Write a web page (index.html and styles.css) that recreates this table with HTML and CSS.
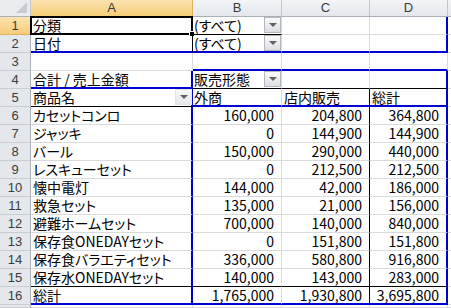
FILE: index.html
```html
<!DOCTYPE html>
<html lang="ja">
<head>
<meta charset="utf-8">
<link rel="stylesheet" href="styles.css">
</head>
<body>
<div class="sheet">
  <div class="corner"><span class="tri"></span></div>
  <div class="ch sel">A</div>
  <div class="ch">B</div>
  <div class="ch">C</div>
  <div class="ch">D</div>
  <div class="ch last"></div>

  <div class="rh sel">1</div>
  <div class="c a1 brk bbk">分類<span class="active"><span class="handle"></span></span></div>
  <div class="c b bbk">(すべて)<span class="dd"><i></i></span></div>
  <div class="c"></div>
  <div class="c br2"></div>
  <div class="c"></div>

  <div class="rh">2</div>
  <div class="c brk bb2">日付</div>
  <div class="c b bb2">(すべて)<span class="dd"><i></i></span></div>
  <div class="c bb2"></div>
  <div class="c bb2 br2"></div>
  <div class="c"></div>

  <div class="rh">3</div>
  <div class="c"></div>
  <div class="c bb2"></div>
  <div class="c bb2"></div>
  <div class="c bb2"></div>
  <div class="c"></div>

  <div class="rh">4</div>
  <div class="c bb2 br2">合計 / 売上金額</div>
  <div class="c b bbk">販売形態<span class="dd"><i></i></span></div>
  <div class="c bbk"></div>
  <div class="c bbk br2"></div>
  <div class="c"></div>

  <div class="rh">5</div>
  <div class="c bbk br2">商品名<span class="dd light"><i></i></span></div>
  <div class="c b bb2">外商</div>
  <div class="c bb2 brk">店内販売</div>
  <div class="c bb2 br2">総計</div>
  <div class="c"></div>

  <div class="rh">6</div>
  <div class="c br2">カセットコンロ</div>
  <div class="c n">160,000</div>
  <div class="c n brk">204,800</div>
  <div class="c n br2">364,800</div>
  <div class="c"></div>

  <div class="rh">7</div>
  <div class="c br2">ジャッキ</div>
  <div class="c n">0</div>
  <div class="c n brk">144,900</div>
  <div class="c n br2">144,900</div>
  <div class="c"></div>

  <div class="rh">8</div>
  <div class="c br2">バール</div>
  <div class="c n">150,000</div>
  <div class="c n brk">290,000</div>
  <div class="c n br2">440,000</div>
  <div class="c"></div>

  <div class="rh">9</div>
  <div class="c br2">レスキューセット</div>
  <div class="c n">0</div>
  <div class="c n brk">212,500</div>
  <div class="c n br2">212,500</div>
  <div class="c"></div>

  <div class="rh">10</div>
  <div class="c br2">懐中電灯</div>
  <div class="c n">144,000</div>
  <div class="c n brk">42,000</div>
  <div class="c n br2">186,000</div>
  <div class="c"></div>

  <div class="rh">11</div>
  <div class="c br2">救急セット</div>
  <div class="c n">135,000</div>
  <div class="c n brk">21,000</div>
  <div class="c n br2">156,000</div>
  <div class="c"></div>

  <div class="rh">12</div>
  <div class="c br2">避難ホームセット</div>
  <div class="c n">700,000</div>
  <div class="c n brk">140,000</div>
  <div class="c n br2">840,000</div>
  <div class="c"></div>

  <div class="rh">13</div>
  <div class="c br2">保存食ONEDAYセット</div>
  <div class="c n">0</div>
  <div class="c n brk">151,800</div>
  <div class="c n br2">151,800</div>
  <div class="c"></div>

  <div class="rh">14</div>
  <div class="c br2">保存食バラエティセット</div>
  <div class="c n">336,000</div>
  <div class="c n brk">580,800</div>
  <div class="c n br2">916,800</div>
  <div class="c"></div>

  <div class="rh">15</div>
  <div class="c bbk br2">保存水ONEDAYセット</div>
  <div class="c n bbk">140,000</div>
  <div class="c n bbk brk">143,000</div>
  <div class="c n bbk br2">283,000</div>
  <div class="c"></div>

  <div class="rh">16</div>
  <div class="c bb2 br2">総計</div>
  <div class="c n bb2">1,765,000</div>
  <div class="c n bb2 brk">1,930,800</div>
  <div class="c n bb2 br2">3,695,800</div>
  <div class="c"></div>

  <div class="rh"></div>
  <div class="c"></div>
  <div class="c"></div>
  <div class="c"></div>
  <div class="c"></div>
  <div class="c"></div>
</div>
</body>
</html>
```
FILE: styles.css
```css
* { box-sizing: border-box; margin: 0; padding: 0; }
html, body { width: 451px; height: 308px; overflow: hidden; background: #fff; }
body {
  font-family: "Noto Sans CJK JP", "Noto Sans", sans-serif;
  font-feature-settings: "palt";
  font-size: 14px;
  color: #000;
}
.sheet {
  display: grid;
  grid-template-columns: 31px 162px 89px 88px 78px 4px;
  grid-template-rows: 17px repeat(16, 18px) 1fr;
  width: 452px;
  height: 308px;
}
.corner {
  background: #e9ebee;
  border-right: 1px solid #c3c7cc;
  border-bottom: 1px solid #aab0b8;
  position: relative;
}
.tri {
  position: absolute;
  right: 3px;
  bottom: 3px;
  width: 0; height: 0;
  border-left: 11px solid transparent;
  border-bottom: 11px solid #c8cbcf;
}
.ch {
  background: linear-gradient(#f3f5f7, #e3e7eb);
  border-right: 1px solid #c3c7cc;
  border-bottom: 1px solid #aab0b8;
  font-family: "Liberation Sans", Arial, sans-serif;
  font-size: 13px;
  line-height: 16px;
  color: #3b3b3b;
  text-align: center;
}
.ch.sel {
  background: linear-gradient(#fbe3b0, #f6cd78);
  border-bottom: 1px solid #e4a43c;
  border-right: 1px solid #e0b060;
}
.rh {
  background: #e4e8ed;
  border-right: 1px solid #aab0b8;
  border-bottom: 1px solid #c9cdd2;
  font-family: "Liberation Sans", Arial, sans-serif;
  font-size: 13px;
  line-height: 17px;
  color: #3b3b3b;
  text-align: center;
}
.rh.sel {
  background: linear-gradient(#fbe3b0, #f6cd78);
  border-bottom: 1px solid #e0b060;
  border-right: 1px solid #e4a43c;
}
.c {
  border-right: 1px solid #d9dadb;
  border-bottom: 1px solid #d9dadb;
  display: flex;
  align-items: center;
  padding-left: 2px;
  line-height: 15px;
  white-space: nowrap;
  position: relative;
}
.c.b { padding-left: 1px; }
.c.n { justify-content: flex-end; padding-right: 7px; }
.bb2 { border-bottom: 2px solid #0000d0; }
.br2 { border-right: 2px solid #0000d0; }
.bbk { border-bottom: 1px solid #000; }
.brk { border-right: 1px solid #000; }
.bb2.brk { border-bottom: 2px solid #0000d0; border-right: 1px solid #000; }

.dd {
  margin-left: auto;
  width: 17px;
  height: 16px;
  border: 1px solid #b4b8bc;
  background: linear-gradient(#fafafa, #dcdfe2);
  display: flex;
  align-items: center;
  justify-content: center;
  align-self: flex-start;
}
.dd.light {
  border-color: #e2e4e6;
  background: linear-gradient(#f6f7f8, #e6e8ea);
  margin-right: -1px;
}
.dd i {
  width: 0; height: 0;
  border-left: 4px solid transparent;
  border-right: 4px solid transparent;
  border-top: 4px solid #606060;
}
.active {
  position: absolute;
  left: -1px; top: -1px; right: -1px; bottom: -1px;
  border: 2px solid #000;
}
.handle {
  position: absolute;
  right: -4px; bottom: -4px;
  width: 6px; height: 6px;
  background: #000;
  border: 1px solid #fff;
}
```
